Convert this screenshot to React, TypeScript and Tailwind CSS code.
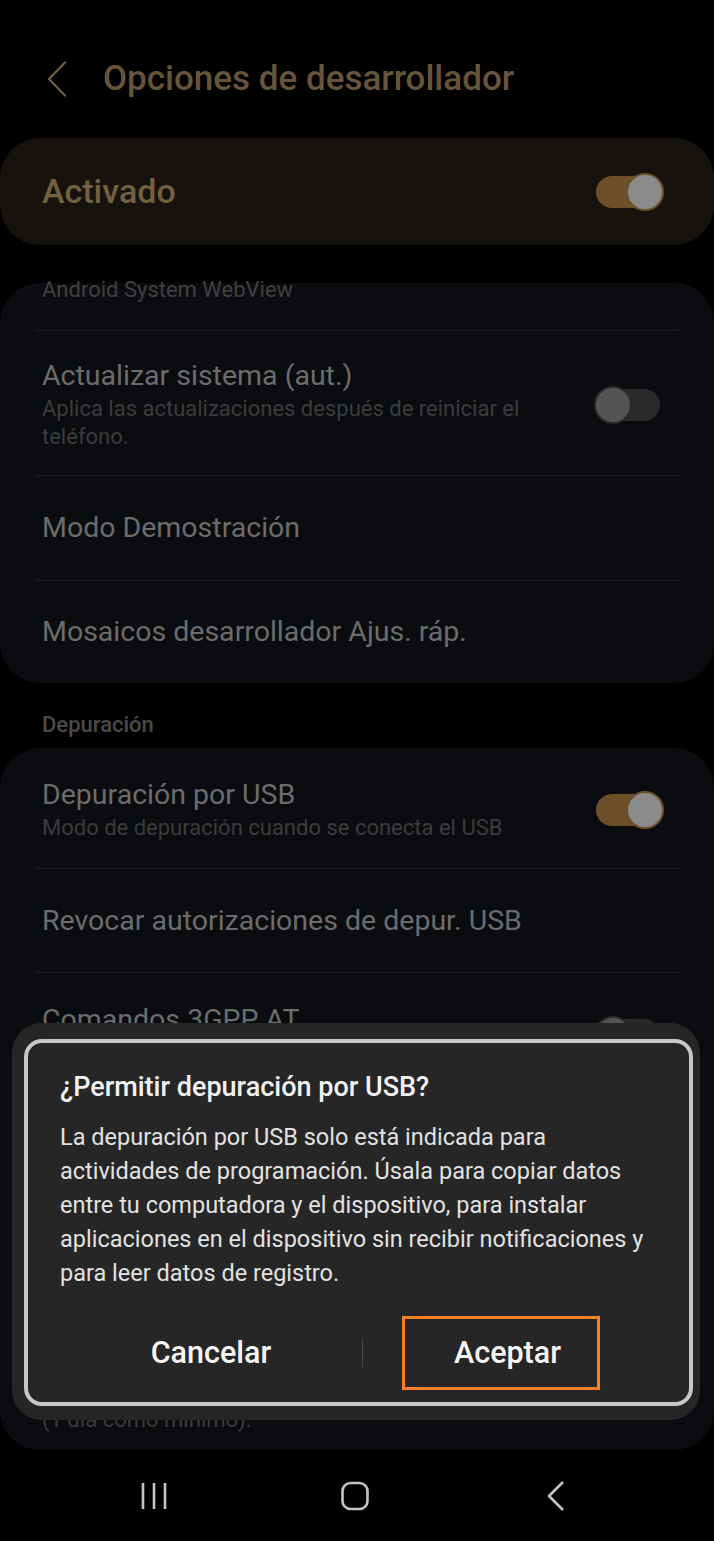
import React from "react"

const font = { fontFamily: "Roboto, 'Noto Sans', sans-serif" }

function Toggle({ on }: { on: boolean }) {
  if (on) {
    return (
      <div className="flex h-[32px] w-[64px] shrink-0 items-center justify-end rounded-full bg-[#6d5029]">
        <div className="-mr-[4px] size-[38px] shrink-0 rounded-full border-2 border-[#6d5029] bg-[#8b8b8b]" />
      </div>
    )
  }
  return (
    <div className="flex h-[32px] w-[64px] shrink-0 items-center justify-start rounded-full bg-[#2a2a2a]">
      <div className="-ml-[2px] size-[38px] shrink-0 rounded-full border-2 border-[#2a2a2a] bg-[#545454]" />
    </div>
  )
}

function Divider() {
  return <div className="mx-[35px] h-px bg-[#1c1d20]" />
}

function Row({
  title,
  sub,
  toggle,
  className,
}: {
  title: string
  sub?: string[]
  toggle?: boolean
  className: string
}) {
  return (
    <div className={`flex items-center justify-between pl-[42px] pr-[54px] ${className}`}>
      <div className="flex flex-col">
        <span className="text-[28.5px] leading-[34px] text-[#6c6c6c]">{title}</span>
        {sub && (
          <span className="mt-[2px] text-[22px] leading-[28px] text-[#3c3c3c]">
            {sub.map((l, i) => (
              <span key={i} className="block">
                {l}
              </span>
            ))}
          </span>
        )}
      </div>
      {toggle !== undefined && <Toggle on={toggle} />}
    </div>
  )
}

export default function App() {
  return (
    <div className="relative h-[1541px] w-[714px] overflow-hidden bg-black" style={font}>
      {/* header */}
      <div className="flex h-[138px] items-start pt-[47px]">
        <div className="flex h-[64px] items-center pl-[47px]">
          <svg width="20" height="36" viewBox="0 0 20 36" fill="none">
            <polyline points="18,1.5 2,18 18,34.5" stroke="#6e5f47" strokeWidth="2.2" strokeLinecap="round" strokeLinejoin="round" />
          </svg>
          <span className="ml-[36px] text-[35px] font-medium text-[#66553a]">Opciones de desarrollador</span>
        </div>
      </div>

      {/* master switch */}
      <div className="flex h-[107px] items-center justify-between rounded-[40px] bg-[#16130e] pl-[42px] pr-[54px]">
        <span className="text-[34px] font-medium text-[#72603f]">Activado</span>
        <Toggle on />
      </div>

      {/* card 2 */}
      <div className="mt-[38px] flex h-[400px] flex-col rounded-[40px] bg-[#0b0c0f]">
        <div className="h-[47px] pl-[42px]">
          <span className="-mt-[4px] block text-[22px] leading-[22px] text-[#404040]">Android System WebView</span>
        </div>
        <Divider />
        <Row
          className="h-[144px] pt-[4px]"
          title="Actualizar sistema (aut.)"
          sub={["Aplica las actualizaciones después de reiniciar el", "teléfono."]}
          toggle={false}
        />
        <Divider />
        <Row className="h-[104px]" title="Modo Demostración" />
        <Divider />
        <Row className="flex-1" title="Mosaicos desarrollador Ajus. ráp." />
      </div>

      <div className="px-[42px] pb-[11px] pt-[30px] text-[22px] font-medium leading-[24px] text-[#4a4a4a]">Depuración</div>

      {/* card 3 */}
      <div className="flex h-[702px] flex-col rounded-[40px] bg-[#0b0c0f]">
        <Row
          className="h-[120px] pt-[4px]"
          title="Depuración por USB"
          sub={["Modo de depuración cuando se conecta el USB"]}
          toggle
        />
        <Divider />
        <Row className="h-[103px]" title="Revocar autorizaciones de depur. USB" />
        <Divider />
        <Row
          className="h-[120px] pt-[4px]"
          title="Comandos 3GPP AT"
          sub={["Permite el uso de comandos AT a través del USB"]}
          toggle={false}
        />
        <Divider />
        <div className="flex flex-1 flex-col justify-end pb-[16px] pl-[42px] pr-[54px]">
          <span className="text-[28.5px] leading-[34px] text-[#6c6c6c]">Desactivar tiempo de espera de autorizaciones ADB</span>
          <span className="mt-[2px] text-[22px] leading-[28px] text-[#3c3c3c]">
            Desactiva la revocación automática de autorizaciones ADB para sistemas que no se han vuelto a conectar en el tiempo predeterminado (7 días) o configurado por el usuario
            <span className="block">(1 día como mínimo).</span>
          </span>
        </div>
      </div>

      {/* nav bar */}
      <div className="flex h-[91px] items-center justify-center gap-[173px] pr-[4px]">
        <svg width="28" height="30" viewBox="0 0 28 30" fill="none">
          <line x1="3" y1="2" x2="3" y2="28" stroke="#c4c4c4" strokeWidth="2.6" />
          <line x1="14" y1="2" x2="14" y2="28" stroke="#c4c4c4" strokeWidth="2.6" />
          <line x1="25" y1="2" x2="25" y2="28" stroke="#c4c4c4" strokeWidth="2.6" />
        </svg>
        <svg width="28" height="30" viewBox="0 0 28 30" fill="none">
          <rect x="1.5" y="2" width="25" height="26" rx="8" stroke="#c4c4c4" strokeWidth="2.6" />
        </svg>
        <svg width="28" height="30" viewBox="0 0 28 30" fill="none">
          <polyline points="21,1 7,15 21,29" stroke="#c4c4c4" strokeWidth="2.6" strokeLinejoin="round" />
        </svg>
      </div>

      {/* dialog */}
      <div className="absolute left-[12px] top-[1023px] flex h-[397px] w-[688px] flex-col rounded-[30px] bg-[#262626] px-[48px] pb-[30px] pt-[48px]">
        <div className="text-[27px] font-medium leading-[32px] text-[#f2f2f2]">¿Permitir depuración por USB?</div>
        <p className="mt-[17px] text-[23.5px] leading-[34px] text-[#e2e2e2]">
          La depuración por USB solo está indicada para actividades de programación. Úsala para copiar datos entre tu computadora y el dispositivo, para instalar aplicaciones en el dispositivo sin recibir notificaciones y para leer datos de registro.
        </p>
        <div className="mt-auto flex h-[74px] items-center">
          <div className="flex w-[302px] flex-none justify-center text-[30.5px] font-medium text-[#f5f5f5]">Cancelar</div>
          <div className="h-[28px] w-px bg-[#4a4a4a]" />
          <div className="flex w-[289px] flex-none justify-center text-[30.5px] font-medium text-[#f5f5f5]">Aceptar</div>
        </div>
        {/* annotation frames */}
        <div className="absolute left-[12px] top-[16px] h-[367px] w-[669px] rounded-[18px] border-[4px] border-[#c8c8c8]" />
        <div className="absolute left-[390px] top-[293px] h-[74px] w-[198px] border-[3px] border-[#fb7f28]" />
      </div>
    </div>
  )
}
